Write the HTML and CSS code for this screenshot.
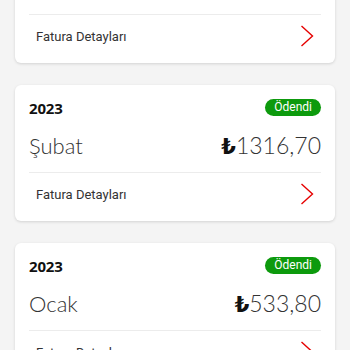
FILE: index.html
```html
<!DOCTYPE html>
<html lang="tr">
<head>
<meta charset="utf-8">
<link rel="stylesheet" href="styles.css">
</head>
<body>
<div class="list">
  <div class="card first">
    <div class="head"><span class="year">2023</span><span class="badge">Ödendi</span></div>
    <div class="main"><span class="month">Mart</span><span class="amount"><span class="cur">₺</span>1200,00</span></div>
    <div class="divider"></div>
    <div class="foot"><span class="link">Fatura Detayları</span>
      <svg class="chev" width="14" height="22" viewBox="0 0 14 22"><path d="M1.5 1 L12.5 11 L1.5 21" fill="none" stroke="#e60000" stroke-width="1.4"/></svg>
    </div>
  </div>
  <div class="card">
    <div class="head"><span class="year">2023</span><span class="badge">Ödendi</span></div>
    <div class="main"><span class="month">Şubat</span><span class="amount"><span class="cur">₺</span>1316,70</span></div>
    <div class="divider"></div>
    <div class="foot"><span class="link">Fatura Detayları</span>
      <svg class="chev" width="14" height="22" viewBox="0 0 14 22"><path d="M1.5 1 L12.5 11 L1.5 21" fill="none" stroke="#e60000" stroke-width="1.4"/></svg>
    </div>
  </div>
  <div class="card">
    <div class="head"><span class="year">2023</span><span class="badge">Ödendi</span></div>
    <div class="main"><span class="month">Ocak</span><span class="amount"><span class="cur">₺</span>533,80</span></div>
    <div class="divider"></div>
    <div class="foot"><span class="link">Fatura Detayları</span>
      <svg class="chev" width="14" height="22" viewBox="0 0 14 22"><path d="M1.5 1 L12.5 11 L1.5 21" fill="none" stroke="#e60000" stroke-width="1.4"/></svg>
    </div>
  </div>
</div>
</body>
</html>
```

FILE: styles.css
```css
html, body {
  margin: 0;
  padding: 0;
  background: #f4f4f4;
  font-family: Roboto, "DejaVu Sans", sans-serif;
  color: #222;
  overflow: hidden;
  height: 350px;
}
.list {
  display: flex;
  flex-direction: column;
  gap: 22px;
  padding: 0 15px;
  margin-top: -73px;
}
.card {
  background: #fff;
  border-radius: 6px;
  box-shadow: 0 1px 3px rgba(0,0,0,0.14);
  padding: 14px 14px 6px;
  height: 136px;
  box-sizing: border-box;
  display: flex;
  flex-direction: column;
}
.first .head, .first .main {
  visibility: hidden;
}
.head {
  display: flex;
  justify-content: space-between;
  align-items: center;
  height: 17px;
}
.year {
  font-family: "Open Sans", sans-serif;
  font-weight: 700;
  font-size: 15px;
  color: #111;
  letter-spacing: -0.2px;
}
.badge {
  background: #0d9a0d;
  color: #fff;
  font-size: 12px;
  line-height: 17px;
  height: 17px;
  padding: 0 9px;
  border-radius: 9px;
}
.main {
  display: flex;
  justify-content: space-between;
  align-items: center;
  height: 30px;
  margin-top: 14px;
}
.month {
  font-family: Lato, sans-serif;
  font-weight: 300;
  font-size: 22px;
  color: #333;
}
.amount {
  font-family: Lato, sans-serif;
  font-weight: 300;
  font-size: 23px;
  color: #333;
}
.cur {
  font-family: "DejaVu Sans", sans-serif;
  font-weight: 700;
  font-size: 21px;
  color: #111;
}
.divider {
  height: 1px;
  background: #ececec;
  margin-top: 12px;
}
.foot {
  display: flex;
  justify-content: space-between;
  align-items: center;
  height: 42px;
  padding: 0 7px 0 7px;
}
.link {
  font-size: 13px;
  color: #333;
}
.chev {
  display: block;
}
```
